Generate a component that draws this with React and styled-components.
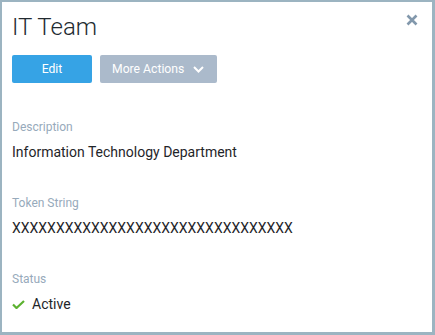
import React from "react";
import styled, { createGlobalStyle } from "styled-components";

const Global = createGlobalStyle`
  html, body { margin: 0; padding: 0; background: #ffffff; }
  body { font-family: Roboto, "Noto Sans", "Liberation Sans", sans-serif; }
  * { box-sizing: border-box; }
`;

const Panel = styled.div`
  width: 435px;
  height: 335px;
  border: 2px solid #9cb4c1;
  border-right-width: 3px;
  border-bottom-width: 3px;
  background: #fff;
  padding: 9px 14px 0 10px;
  display: flex;
  flex-direction: column;
`;

const Header = styled.div`
  display: flex;
  justify-content: space-between;
  align-items: flex-start;
`;

const Title = styled.h1`
  margin: 0;
  font-size: 24px;
  line-height: 32px;
  font-weight: 300;
  color: #222a30;
`;

const Close = styled.button`
  border: 0;
  background: none;
  padding: 0;
  margin-top: 3px;
  width: 12px;
  height: 12px;
  display: flex;
  cursor: pointer;
`;

const Actions = styled.div`
  display: flex;
  gap: 8px;
  margin-top: 12px;
`;

const Button = styled.button`
  height: 28px;
  border: 0;
  border-radius: 2px;
  background: ${(p) => (p.$primary ? "#36a3e5" : "#abbacb")};
  color: #fff;
  font-family: Roboto, "Noto Sans", sans-serif;
  font-size: 12.2px;
  font-weight: 400;
  padding: ${(p) => (p.$primary ? "0" : "0 13px 0 12px")};
  width: ${(p) => (p.$primary ? "80px" : "auto")};
  display: flex;
  align-items: center;
  justify-content: center;
  gap: 9px;
`;

const Fields = styled.div`
  display: flex;
  flex-direction: column;
  gap: 33px;
  margin-top: 36px;
`;

const Field = styled.div`
  display: flex;
  flex-direction: column;
`;

const Label = styled.div`
  font-size: 12px;
  line-height: 16px;
  color: #97aabb;
  margin-bottom: 7px;
`;

const Value = styled.div`
  font-size: 14px;
  line-height: 20px;
  color: #1f2529;
  display: flex;
  align-items: center;
  gap: 7px;
`;

export default function App() {
  return (
    <>
      <Global />
      <Panel>
        <Header>
          <Title>IT Team</Title>
          <Close aria-label="Close">
            <svg width="12" height="12" viewBox="0 0 12 12">
              <path d="M1.5 1.5 L10.5 10.5 M10.5 1.5 L1.5 10.5" stroke="#8298ac" strokeWidth="2.6" strokeLinecap="butt" />
            </svg>
          </Close>
        </Header>
        <Actions>
          <Button $primary>Edit</Button>
          <Button>
            More Actions
            <svg width="11" height="7" viewBox="0 0 11 7">
              <path d="M1 1 L5.5 5.5 L10 1" fill="none" stroke="#fff" strokeWidth="2" />
            </svg>
          </Button>
        </Actions>
        <Fields>
          <Field>
            <Label>Description</Label>
            <Value>Information Technology Department</Value>
          </Field>
          <Field>
            <Label>Token String</Label>
            <Value>XXXXXXXXXXXXXXXXXXXXXXXXXXXXXXXX</Value>
          </Field>
          <Field>
            <Label>Status</Label>
            <Value>
              <svg width="13" height="9" viewBox="0 0 13 9">
                <path d="M1 4.5 L4.5 8 L12 1" fill="none" stroke="#5cb230" strokeWidth="2.2" />
              </svg>
              Active
            </Value>
          </Field>
        </Fields>
      </Panel>
    </>
  );
}
